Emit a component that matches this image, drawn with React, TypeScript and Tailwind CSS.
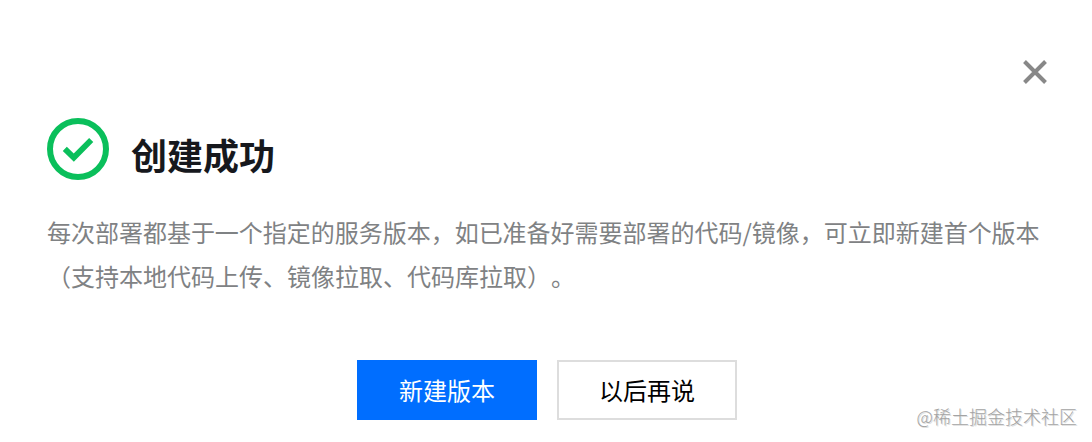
import type { ReactNode } from "react";

function SuccessIcon() {
  return (
    <svg className="h-[62px] w-[62px] shrink-0" viewBox="0 0 62 62" fill="none">
      <circle cx="31" cy="31" r="28" stroke="#0abf5b" strokeWidth="6" />
      <path d="M17.8 30.9 26.8 39.6 44.2 22" stroke="#0abf5b" strokeWidth="5.8" />
    </svg>
  );
}

function CloseIcon() {
  return (
    <svg className="h-6 w-6" viewBox="0 0 24 24" fill="none">
      <path d="M1.5 1.5 22.5 22.5M22.5 1.5 1.5 22.5" stroke="#888888" strokeWidth="4" />
    </svg>
  );
}

function DialogButton({ primary, children }: { primary?: boolean; children: ReactNode }) {
  return (
    <button
      type="button"
      className={`flex h-[60px] w-[180px] items-center justify-center border-2 text-2xl leading-8 ${
        primary ? "border-[#006eff] bg-[#006eff] text-white" : "border-[#dddddd] bg-white text-black"
      }`}
    >
      {children}
    </button>
  );
}

export default function App() {
  return (
    <div className="relative h-[442px] w-[1092px] overflow-hidden bg-white font-['Noto_Sans_CJK_SC',sans-serif]">
      <div className="flex justify-end pt-[60px] pr-[45px]">
        <button type="button" aria-label="关闭" className="h-6 w-6">
          <CloseIcon />
        </button>
      </div>

      <div className="mt-[34px] flex items-center gap-[22px] pl-[47px]">
        <SuccessIcon />
        <h1 className="pt-2.5 text-4xl leading-[50px] font-bold text-[#16181d]">创建成功</h1>
      </div>

      <div className="mt-[30px] pl-[47px] text-2xl leading-[44px] whitespace-nowrap text-[#7f8284] [text-spacing-trim:space-all]">
        <p className="tracking-[-0.02px]">每次部署都基于一个指定的服务版本，如已准备好需要部署的代码/镜像，可立即新建首个版本</p>
        <p>（支持本地代码上传、镜像拉取、代码库拉取）。</p>
      </div>

      <div className="mt-[62px] flex justify-center gap-5 pl-0.5">
        <DialogButton primary>新建版本</DialogButton>
        <DialogButton>以后再说</DialogButton>
      </div>

      <span className="absolute right-[15px] bottom-3.5 text-lg leading-6 font-light text-[#a3a3a3] [text-shadow:1px_1px_0_#dedede]">
        @稀土掘金技术社区
      </span>
    </div>
  );
}
